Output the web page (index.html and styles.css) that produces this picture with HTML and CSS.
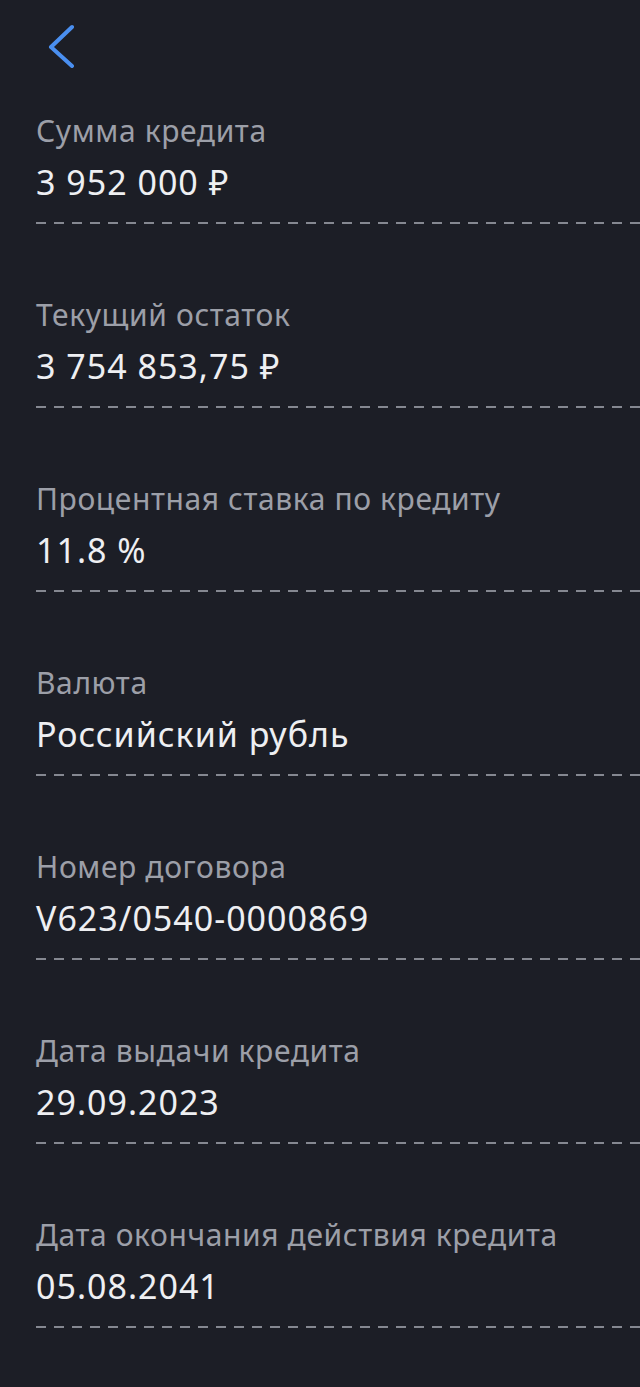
FILE: index.html
```html
<!DOCTYPE html>
<html lang="ru">
<head>
    <meta charset="UTF-8">
    <meta name="viewport" content="width=device-width, initial-scale=1.0">
    <title>Детали кредита</title>
    <link rel="stylesheet" href="styles.css">
</head>
<body>
    <header class="top">
        <button class="btn-back" type="button" aria-label="Назад">
            <svg width="40" height="48" viewBox="0 0 40 48">
                <path d="M26 7 L5 27 L26 46" fill="none" stroke="#4a8ff0" stroke-width="4" stroke-linecap="round" stroke-linejoin="round"/>
            </svg>
        </button>
    </header>

    <div class="details">
        <div class="item">
            <div class="label">Сумма кредита</div>
            <div class="value">3 952 000 ₽</div>
        </div>
        <div class="item">
            <div class="label">Текущий остаток</div>
            <div class="value">3 754 853,75 ₽</div>
        </div>
        <div class="item">
            <div class="label">Процентная ставка по кредиту</div>
            <div class="value">11.8 %</div>
        </div>
        <div class="item">
            <div class="label">Валюта</div>
            <div class="value">Российский рубль</div>
        </div>
        <div class="item">
            <div class="label">Номер договора</div>
            <div class="value">V623/0540-0000869</div>
        </div>
        <div class="item">
            <div class="label">Дата выдачи кредита</div>
            <div class="value">29.09.2023</div>
        </div>
        <div class="item">
            <div class="label">Дата окончания действия кредита</div>
            <div class="value">05.08.2041</div>
        </div>
    </div>
</body>
</html>
```

FILE: styles.css
```css
body {
    font-family: 'Noto Sans', 'Open Sans', sans-serif;
    background-color: #1c1e26;
    margin: 0;
    padding: 0;
    color: #eeeff2;
}

.top {
    height: 113px;
    padding-left: 46px;
    box-sizing: border-box;
    padding-top: 20px;
}

.btn-back {
    background: none;
    border: none;
    padding: 0;
    display: block;
    cursor: pointer;
}

.btn-back svg {
    display: block;
}

.details {
    padding-left: 36px;
}

.item {
    padding-bottom: 73px;
}

.label {
    font-size: 30px;
    line-height: 36px;
    letter-spacing: 0.6px;
    color: #9c9fa8;
    white-space: nowrap;
}

.value {
    font-size: 34px;
    line-height: 40px;
    letter-spacing: 1px;
    margin-top: 13px;
    color: #eeeff2;
    white-space: nowrap;
}

.value::after {
    content: "";
    display: block;
    height: 2px;
    margin-top: 20px;
    background-image: linear-gradient(to right, #858891 10px, transparent 10px);
    background-size: 18px 2px;
    background-repeat: repeat-x;
}
```
